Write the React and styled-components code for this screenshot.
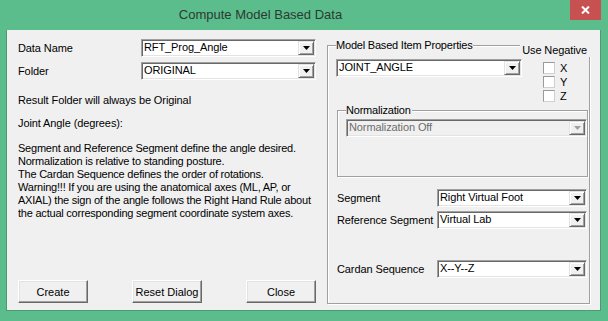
import React from "react";
import styled, { createGlobalStyle } from "styled-components";

const Global = createGlobalStyle`
  html, body { margin: 0; padding: 0; background: #5BBD8B; }
  body { font-family: "Liberation Sans", Arial, sans-serif; }
  * { box-sizing: border-box; }
`;

const FONT = `"Liberation Sans", Arial, sans-serif`;

const Window = styled.div`
  width: 608px;
  height: 321px;
  background: #5BBD8B;
  display: flex;
  flex-direction: column;
  overflow: hidden;
`;

const TitleBar = styled.div`
  height: 30px;
  flex-shrink: 0;
  display: flex;
  align-items: flex-start;
`;

const Title = styled.div`
  flex: 1;
  height: 30px;
  line-height: 29px;
  text-align: center;
  padding-right: 49px;
  font-family: ${FONT};
  font-size: 13px;
  color: #2c3a33;
`;

const CloseButton = styled.div`
  width: 31px;
  height: 20px;
  margin-right: 7px;
  background: #C75050;
  display: flex;
  align-items: center;
  justify-content: center;
`;

const Client = styled.div`
  height: 281px;
  margin: 0 7px 10px 6px;
  background: #F0F0F0;
  border: 1px solid #4A9A73;
  border-top: none;
  display: flex;
  padding: 9px 0 7px 11px;
  font-family: ${FONT};
  font-size: 11px;
  letter-spacing: -0.1px;
  color: #000;
`;

const LeftColumn = styled.div`
  width: 298px;
  display: flex;
  flex-direction: column;
`;

const FieldRow = styled.div`
  display: flex;
  align-items: center;
  height: 18px;
  margin-top: ${(p) => p.$mt || 0}px;
  margin-left: ${(p) => p.$ml || 0}px;
`;

const Label = styled.div`
  width: ${(p) => p.$w}px;
  flex-shrink: 0;
  line-height: 13px;
  white-space: nowrap;
`;

const Note = styled.div`
  line-height: 13px;
  margin-top: ${(p) => p.$mt || 0}px;
  white-space: nowrap;
`;

const Paragraph = styled(Note)`
  letter-spacing: -0.22px;
`;

const ButtonRow = styled.div`
  margin-top: auto;
  display: flex;
  justify-content: space-between;
`;

const PushButton = styled.button`
  width: 70px;
  height: 23px;
  padding: 0;
  background: #F0F0F0;
  font-family: ${FONT};
  font-size: 11px;
  color: #000;
  border: 1px solid;
  border-color: #fff #696969 #696969 #fff;
  box-shadow: inset -1px -1px 0 #A0A0A0, inset 1px 1px 0 #E3E3E3;
`;

const Combo = styled.div`
  width: ${(p) => p.$w}px;
  height: 18px;
  flex-shrink: 0;
  display: flex;
  background: ${(p) => (p.$disabled ? "#F0F0F0" : "#fff")};
  border: 1px solid;
  border-color: #A0A0A0 #fff #fff #A0A0A0;
  box-shadow: inset 1px 1px 0 #696969, inset -1px -1px 0 #E3E3E3;
`;

const ComboText = styled.div`
  flex: 1;
  padding-left: 2px;
  line-height: 15px;
  white-space: nowrap;
  overflow: hidden;
  color: ${(p) => (p.$disabled ? "#6D6D6D" : "#000")};
`;

const DropButton = styled.div`
  width: 16px;
  margin: 1px 1px 1px 0;
  background: #F0F0F0;
  border: 1px solid;
  border-color: #E3E3E3 #696969 #696969 #E3E3E3;
  box-shadow: inset 1px 1px 0 #fff, inset -1px -1px 0 #A0A0A0;
  display: flex;
  align-items: center;
  justify-content: center;
`;

const GroupBox = styled.div`
  position: relative;
  width: ${(p) => p.$w}px;
  height: ${(p) => p.$h}px;
  margin-top: ${(p) => p.$mt || 0}px;
  margin-left: ${(p) => p.$ml || 0}px;
  padding: ${(p) => p.$pad};
  border: 1px solid #A0A0A0;
  box-shadow: inset 1px 1px 0 #fff, 1px 1px 0 #fff;
  flex-shrink: 0;
`;

const Caption = styled.div`
  position: absolute;
  top: -7px;
  left: 8px;
  padding: 0 1px 0 0;
  line-height: 13px;
  background: #F0F0F0;
  white-space: nowrap;
  letter-spacing: -0.2px;
`;

const SideCaption = styled.div`
  position: absolute;
  top: -2px;
  right: -3px;
  padding: 0 5px 0 2px;
  line-height: 13px;
  background: #F0F0F0;
  white-space: nowrap;
`;

const TopRow = styled.div`
  display: flex;
  align-items: flex-start;
`;

const CheckColumn = styled.div`
  margin-left: 21px;
  margin-top: 2px;
  display: flex;
  flex-direction: column;
`;

const CheckRow = styled.label`
  display: flex;
  align-items: center;
  height: 14px;
`;

const CheckBox = styled.span`
  width: 12px;
  height: 12px;
  background: #fff;
  border: 1px solid;
  border-color: #9A9A9A #D0D0D0 #D0D0D0 #9A9A9A;
`;

const CheckText = styled.span`
  margin-left: 5px;
  line-height: 13px;
`;

const Arrow = ({ disabled }) => (
  <svg width="7" height="4" viewBox="0 0 7 4">
    <polygon points="0,0 7,0 3.5,4" fill={disabled ? "#A0A0A0" : "#000"} />
  </svg>
);

const ComboBox = ({ w, value, disabled }) => (
  <Combo $w={w} $disabled={disabled}>
    <ComboText $disabled={disabled}>{value}</ComboText>
    <DropButton>
      <Arrow disabled={disabled} />
    </DropButton>
  </Combo>
);

export default function App() {
  return (
    <>
      <Global />
      <Window>
        <TitleBar>
          <Title>Compute Model Based Data</Title>
          <CloseButton>
            <svg width="9" height="8" viewBox="0 0 9 8">
              <path d="M1 0.5 L8 7.5 M8 0.5 L1 7.5" stroke="#fff" strokeWidth="2" />
            </svg>
          </CloseButton>
        </TitleBar>
        <Client>
          <LeftColumn>
            <FieldRow>
              <Label $w={123}>Data Name</Label>
              <ComboBox w={175} value="RFT_Prog_Angle" />
            </FieldRow>
            <FieldRow $mt={5}>
              <Label $w={123}>Folder</Label>
              <ComboBox w={175} value="ORIGINAL" />
            </FieldRow>
            <Note $mt={14}>Result Folder will always be Original</Note>
            <Note $mt={10}>Joint Angle (degrees):</Note>
            <Paragraph $mt={12}>
              Segment and Reference Segment define the angle desired.
              <br />
              Normalization is relative to standing posture.
              <br />
              The Cardan Sequence defines the order of rotations.
              <br />
              Warning!!! If you are using the anatomical axes (ML, AP, or
              <br />
              AXIAL) the sign of the angle follows the Right Hand Rule about
              <br />
              the actual corresponding segment coordinate system axes.
            </Paragraph>
            <ButtonRow>
              <PushButton>Create</PushButton>
              <PushButton>Reset Dialog</PushButton>
              <PushButton>Close</PushButton>
            </ButtonRow>
          </LeftColumn>

          <GroupBox $w={263} $h={259} $mt={6} $ml={11} $pad="13px 0 0 8px">
            <Caption>Model Based Item Properties</Caption>
            <SideCaption>Use Negative</SideCaption>
            <TopRow>
              <ComboBox w={186} value="JOINT_ANGLE" />
              <CheckColumn>
                <CheckRow>
                  <CheckBox />
                  <CheckText>X</CheckText>
                </CheckRow>
                <CheckRow>
                  <CheckBox />
                  <CheckText>Y</CheckText>
                </CheckRow>
                <CheckRow>
                  <CheckBox />
                  <CheckText>Z</CheckText>
                </CheckRow>
              </CheckColumn>
            </TopRow>
            <GroupBox $w={251} $h={67} $mt={7} $ml={1} $pad="8px 0 0 8px">
              <Caption>Normalization</Caption>
              <ComboBox w={241} value="Normalization Off" disabled />
            </GroupBox>
            <FieldRow $mt={12} $ml={1}>
              <Label $w={100}>Segment</Label>
              <ComboBox w={150} value="Right Virtual Foot" />
            </FieldRow>
            <FieldRow $mt={4} $ml={1}>
              <Label $w={100}>Reference Segment</Label>
              <ComboBox w={150} value="Virtual Lab" />
            </FieldRow>
            <FieldRow $mt={31} $ml={1}>
              <Label $w={100}>Cardan Sequence</Label>
              <ComboBox w={150} value="X--Y--Z" />
            </FieldRow>
          </GroupBox>
        </Client>
      </Window>
    </>
  );
}
